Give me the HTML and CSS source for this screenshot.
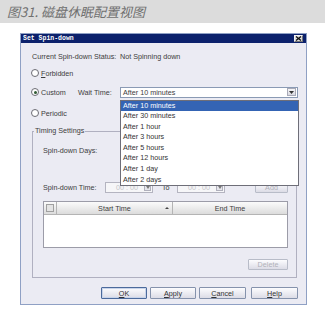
FILE: index.html
```html
<!DOCTYPE html>
<html>
<head>
<meta charset="utf-8">
<link rel="stylesheet" href="styles.css">
</head>
<body>
<div class="caption">图31. 磁盘休眠配置视图</div>
<div class="dialog">
  <div class="titlebar">
    <span class="title">Set Spin-down</span>
    <span class="close"><svg width="7" height="5" viewBox="0 0 7 5"><path d="M1 0.5 L6 4.5 M6 0.5 L1 4.5" stroke="#111" stroke-width="1.3"/></svg></span>
  </div>
  <div class="body">
    <div class="row status"><span class="lbl">Current Spin-down Status:</span><span>Not Spinning down</span></div>
    <div class="row r-forbidden"><span class="radio"></span><span><u>F</u>orbidden</span></div>
    <div class="row r-custom">
      <span class="radio checked"></span><span class="custom-lbl">Custom</span><span class="wait-lbl">Wait Time:</span>
      <div class="combo">
        <span class="combo-text">After 10 minutes</span>
        <span class="combo-btn"><svg width="5" height="3" viewBox="0 0 5 3"><path d="M0 0 H5 L2.5 3 Z" fill="#333"/></svg></span>
        <div class="list">
          <div class="item sel">After 10 minutes</div>
          <div class="item">After 30 minutes</div>
          <div class="item">After 1 hour</div>
          <div class="item">After 3 hours</div>
          <div class="item">After 5 hours</div>
          <div class="item">After 12 hours</div>
          <div class="item">After 1 day</div>
          <div class="item">After 2 days</div>
        </div>
      </div>
    </div>
    <div class="row r-periodic"><span class="radio"></span><span>Periodic</span></div>
    <fieldset class="group">
      <legend>Timing Settings</legend>
      <div class="group-inner">
        <div class="row days"><span>Spin-down Days:</span></div>
        <div class="row time">
          <span class="time-lbl">Spin-down Time:</span>
          <div class="field"><span class="ftext">00 : 00</span><span class="spin"><svg width="4" height="3" viewBox="0 0 4 3"><path d="M0 0 H4 L2 3 Z" fill="#777"/></svg></span></div>
          <span class="to">To</span>
          <div class="field f2"><span class="ftext">00 : 00</span><span class="spin"><svg width="4" height="3" viewBox="0 0 4 3"><path d="M0 0 H4 L2 3 Z" fill="#777"/></svg></span></div>
          <span class="btn small add">Add</span>
        </div>
        <div class="table">
          <div class="thead">
            <div class="th chk"><span class="cbox"></span></div>
            <div class="th start">Start Time<span class="sort"></span></div>
            <div class="th end">End Time</div>
          </div>
        </div>
        <div class="row del-row"><span class="btn small del">Delete</span></div>
      </div>
    </fieldset>
    <div class="row buttons">
      <span class="btn b-ok focus"><u>O</u>K</span>
      <span class="btn b-apply"><u>A</u>pply</span>
      <span class="btn b-cancel"><u>C</u>ancel</span>
      <span class="btn b-help"><u>H</u>elp</span>
    </div>
  </div>
</div>
</body>
</html>
```
FILE: styles.css
```css
* { box-sizing: border-box; }
body {
  margin: 0;
  width: 327px;
  height: 309px;
  overflow: hidden;
  background: #fff;
  font-family: "Liberation Sans", Arial, sans-serif;
  font-size: 7.2px;
  color: #3c3c3c;
}
.caption {
  width: 325px;
  height: 23px;
  background: #dcdcdc;
  padding-left: 7px;
  font: italic 13px/23px "Noto Sans CJK SC", sans-serif;
  color: #707070;
}
.dialog {
  margin: 10px 0 0 20px;
  width: 287px;
  height: 272px;
  border: 1px solid #8fa0c4;
  background: #ebebf3;
  display: flex;
  flex-direction: column;
}
.titlebar {
  height: 9px;
  background: #0c216c;
  color: #fff;
  display: flex;
  align-items: center;
  justify-content: space-between;
  padding: 0 3px 0 2px;
  font: bold 6.5px/9px "Liberation Mono", monospace;
  flex: none;
}
.close {
  width: 9px;
  height: 7px;
  background: #dedede;
  border: 1px solid #f4f4f4;
  border-right-color: #777;
  border-bottom-color: #777;
  display: flex;
  align-items: center;
  justify-content: center;
}
.close svg { display: block; }
.body {
  flex: 1;
  padding: 7px 8px 0 11px;
  display: flex;
  flex-direction: column;
  align-items: flex-start;
}
.row {
  display: flex;
  align-items: center;
  height: 12px;
  white-space: nowrap;
}
.status .lbl { width: 88px; }
.r-forbidden { margin-top: 5px; }
.r-custom { margin-top: 7px; }
.r-periodic { margin-top: 9px; }
.radio {
  width: 8px;
  height: 8px;
  border-radius: 50%;
  border: 1px solid #6c6c74;
  background: #fff;
  margin: 0 2px 0 -1px;
  display: flex;
  align-items: center;
  justify-content: center;
}
.radio.checked::after {
  content: "";
  width: 3px;
  height: 3px;
  border-radius: 50%;
  background: #2f5a33;
}
.custom-lbl { width: 37px; }
.wait-lbl { width: 42px; }
.combo {
  position: relative;
  width: 178px;
  height: 11px;
  border: 1px solid #8a9ab4;
  background: #fff;
  display: flex;
  align-items: center;
  padding-left: 2px;
}
.combo-text { flex: 1; }
.combo-btn {
  width: 9px;
  height: 8px;
  margin-right: 1px;
  background: linear-gradient(#f6f6f8, #d8d8e0);
  border: 1px solid #a8aab8;
  display: flex;
  align-items: center;
  justify-content: center;
}
.combo-btn svg { display: block; }
.list {
  position: absolute;
  left: -1px;
  top: 12px;
  width: 179px;
  border: 1px solid #6e6e78;
  background: #fff;
  z-index: 5;
  color: #333;
}
.item {
  height: 10.6px;
  line-height: 10.6px;
  padding-left: 2px;
}
.item.sel { background: #3464b4; color: #fff; }
.group {
  margin: 8px 0 0 0;
  width: 265px;
  min-width: 0;
  border: 1px solid #b0b0c0;
  padding: 0;
}
.group legend {
  margin-left: 1px;
  padding: 0 1px;
  line-height: 8px;
  font-size: 7.2px;
}
.group-inner {
  padding: 9px 8px 7px 10px;
  display: flex;
  flex-direction: column;
  align-items: flex-start;
}
.time { margin-top: 25px; width: 245px; }
.time-lbl { width: 62px; }
.field {
  width: 48px;
  height: 11px;
  border: 1px solid #b4b4c0;
  background: #f6f6f8;
  display: flex;
  align-items: center;
  justify-content: space-between;
  padding-left: 10px;
  color: #c4c4c8;
}
.spin {
  width: 7px;
  height: 7px;
  margin-right: 1px;
  border: 1px solid #b0b0bc;
  background: #e6e6ec;
  display: flex;
  align-items: center;
  justify-content: center;
}
.spin svg { display: block; }
.to { margin-left: 9px; width: 15px; }
.btn {
  display: flex;
  align-items: center;
  justify-content: center;
  height: 12px;
  border: 1px solid #8592ac;
  border-radius: 1px;
  background: linear-gradient(#fcfcfe, #dcdce6);
  color: #333;
}
.btn.small { height: 11px; border-color: #b8bcc8; color: #b0b0b8; }
.add { width: 33px; margin-left: auto; }
.table {
  margin-top: 8px;
  width: 245px;
  height: 47px;
  border: 1px solid #9c9ca8;
  background: #fff;
}
.thead {
  display: flex;
  height: 13px;
  background: linear-gradient(#fbfbfb, #dcdcdc);
  border-bottom: 1px solid #b4b4b4;
}
.th {
  display: flex;
  align-items: center;
  justify-content: center;
  border-right: 1px solid #b4b4b4;
}
.th.chk { width: 13px; }
.cbox {
  width: 8px;
  height: 8px;
  border: 1px solid #a0a0a0;
  background: #e4e4e4;
}
.th.start { width: 116px; position: relative; }
.sort {
  position: absolute;
  right: 3px;
  top: 5px;
  border-left: 2px solid transparent;
  border-right: 2px solid transparent;
  border-bottom: 2px solid #444;
}
.th.end { flex: 1; border-right: none; }
.del-row { margin-top: 11px; width: 245px; justify-content: flex-end; height: 11px; }
.del { width: 40px; }
.buttons {
  margin-top: 9px;
  align-self: stretch;
  justify-content: flex-end;
  gap: 3px;
}
.buttons .btn { width: 46px; }
.buttons .b-cancel { margin-left: 0; width: 47px; }
.buttons .b-help { margin-left: 2px; width: 47px; }
.btn.focus { border-color: #4c6a9c; box-shadow: inset 0 0 0 1px #c8d4ea; }
```
